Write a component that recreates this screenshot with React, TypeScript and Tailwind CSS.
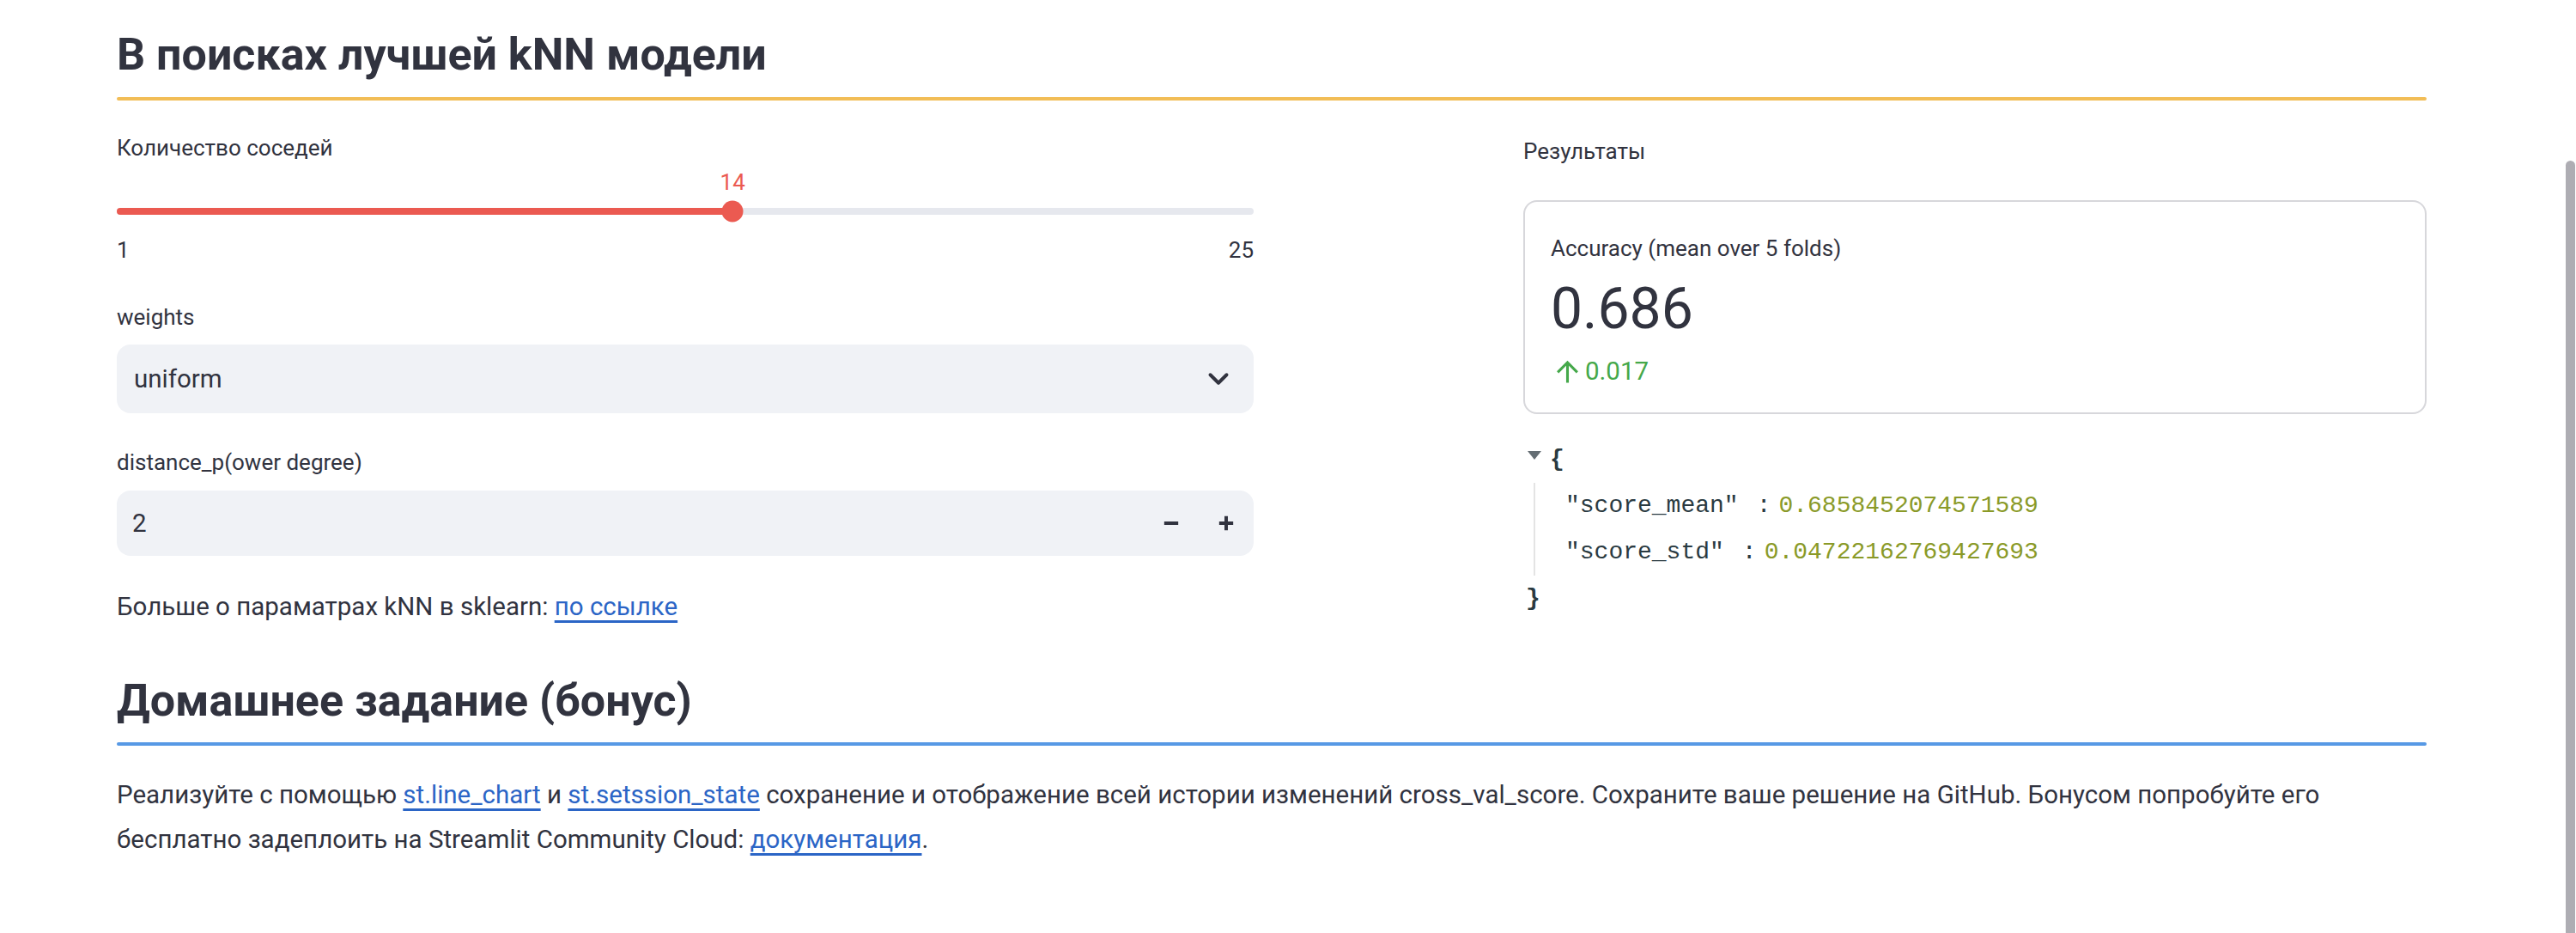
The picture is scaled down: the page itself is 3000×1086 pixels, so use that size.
import { ChevronDown } from "lucide-react";

// slider settings for the kNN neighbours control
const NEIGHBOURS = { value: 14, min: 1, max: 25 };

const Label = ({ children }: { children: React.ReactNode }) => (
  <div className="text-[26px] leading-[40px]">{children}</div>
);

const Slider = () => {
  const pct = ((NEIGHBOURS.value - NEIGHBOURS.min) / (NEIGHBOURS.max - NEIGHBOURS.min)) * 100;
  return (
    <div>
      <Label>Количество соседей</Label>
      <div className="relative h-[40px]">
        <span
          className="absolute top-0 -translate-x-1/2 text-[26px] leading-[40px] text-[#eb5a51]"
          style={{ left: `${pct}%` }}
        >
          {NEIGHBOURS.value}
        </span>
      </div>
      <div className="mt-[2px] flex h-[24px] items-center">
        <div className="relative h-[8px] w-full rounded-full bg-[#e6e8ee]">
          <div className="h-full rounded-full bg-[#eb5a51]" style={{ width: `${pct}%` }} />
          <div
            className="absolute top-1/2 h-[25px] w-[25px] -translate-x-1/2 -translate-y-1/2 rounded-full bg-[#eb5a51]"
            style={{ left: `${pct}%` }}
          />
        </div>
      </div>
      <div className="mt-[13px] flex justify-between text-[26px] leading-[40px]">
        <span>{NEIGHBOURS.min}</span>
        <span>{NEIGHBOURS.max}</span>
      </div>
    </div>
  );
};

const MinusIcon = () => (
  <svg width="28" height="28" viewBox="0 0 24 24" fill="none" stroke="#31333f" strokeWidth="3.4">
    <path d="M5 12h14" />
  </svg>
);

const PlusIcon = () => (
  <svg width="28" height="28" viewBox="0 0 24 24" fill="none" stroke="#31333f" strokeWidth="3.4">
    <path d="M5 12h14M12 5v14" />
  </svg>
);

const ArrowUp = () => (
  <svg width="39" height="39" viewBox="0 0 24 24" fill="none" stroke="#45a84a" strokeWidth="1.9">
    <path d="M12 20V5.5M5 12.5l7-7 7 7" />
  </svg>
);

const JsonView = () => (
  <div className="mt-[26px] font-['Liberation_Mono',monospace] text-[28px] leading-[54px] text-[#2a3a41]">
    <div className="flex h-[54px]">
      <svg className="ml-[5px] mt-[17px]" width="16" height="10" viewBox="0 0 16 10">
        <path d="M0 0h16L8 10z" fill="#646d73" />
      </svg>
      <span className="ml-[10px] font-bold">{"{"}</span>
    </div>
    <div className="ml-[12px] border-l-2 border-[#e4e4e4] pl-[35px]">
      <div>
        <span>"score_mean"</span>
        <span className="ml-[21px] mr-[9px]">:</span>
        <span className="text-[#8a9a28]">0.6858452074571589</span>
      </div>
      <div>
        <span>"score_std"</span>
        <span className="ml-[21px] mr-[9px]">:</span>
        <span className="text-[#8a9a28]">0.04722162769427693</span>
      </div>
    </div>
    <div className="ml-[3px] font-bold">{"}"}</div>
  </div>
);

export default function App() {
  return (
    <div className="relative min-h-screen bg-white font-['Roboto',sans-serif] text-[#31333f]">
      <div className="w-[2826px] pl-[136px] pt-[30px] pb-[60px]">
        <h2 className="text-[52px] font-bold leading-[68px]">В поисках лучшей kNN модели</h2>
        <div className="mt-[15px] h-[4px] rounded-full bg-[#f2bd56]" />

        <div className="mt-[35px] grid grid-cols-[1324px_1052px] gap-x-[314px]">
          {/* left column: inputs */}
          <div>
            <Slider />

            <div className="mt-[38px]">
              <Label>weights</Label>
            </div>
            <div className="mt-[12px] flex h-[80px] items-center justify-between rounded-[16px] bg-[#f0f2f6] pl-[20px] pr-[22px]">
              <span className="text-[29.5px] leading-[44px]">uniform</span>
              <ChevronDown size={38} strokeWidth={2.5} color="#31333f" />
            </div>

            <div className="mt-[37px]">
              <Label>distance_p(ower degree)</Label>
            </div>
            <div className="mt-[13px] flex h-[76px] items-center rounded-[16px] bg-[#f0f2f6] pl-[18px]">
              <span className="flex-1 text-[29.5px] leading-[44px]">2</span>
              <button className="flex h-full w-[64px] items-center justify-center">
                <MinusIcon />
              </button>
              <button className="flex h-full w-[64px] items-center justify-center">
                <PlusIcon />
              </button>
            </div>

            <p className="mt-[34px] text-[29.5px] leading-[51px]">
              Больше о параматрах kNN в sklearn:{" "}
              <a className="text-[#2b65c6] underline decoration-[3px] underline-offset-[6px]" href="#">
                по ссылке
              </a>
            </p>
          </div>

          {/* right column: results */}
          <div className="pt-[4px]">
            <Label>Результаты</Label>
            <div className="mt-[37px] rounded-[16px] border-2 border-[#d7d7db] px-[30px] pt-[34px] pb-[26px]">
              <Label>Accuracy (mean over 5 folds)</Label>
              <div className="mt-[11px] text-[66px] leading-[80px]">0.686</div>
              <div className="mt-[10px] flex h-[44px] items-center text-[29.5px] text-[#45a84a]">
                <ArrowUp />
                <span className="ml-px leading-[44px]">0.017</span>
              </div>
            </div>
            <JsonView />
          </div>
        </div>

        <h2 className="mt-[50px] text-[52px] font-bold leading-[68px]">Домашнее задание (бонус)</h2>
        <div className="mt-[14px] h-[4px] rounded-full bg-[#5799e5]" />

        <p className="mt-[31px] text-[29.5px] leading-[52px]">
          Реализуйте с помощью{" "}
          <a className="text-[#2b65c6] underline decoration-[3px] underline-offset-[6px]" href="#">
            st.line_chart
          </a>{" "}
          и{" "}
          <a className="text-[#2b65c6] underline decoration-[3px] underline-offset-[6px]" href="#">
            st.setssion_state
          </a>{" "}
          сохранение и отображение всей истории изменений cross_val_score. Сохраните ваше решение на GitHub. Бонусом
          попробуйте его
          <br />
          бесплатно задеплоить на Streamlit Community Cloud:{" "}
          <a className="text-[#2b65c6] underline decoration-[3px] underline-offset-[6px]" href="#">
            документация
          </a>
          .
        </p>
      </div>

      {/* scrollbar thumb */}
      <div className="absolute right-[1px] top-[187px] h-[899px] w-[11px] rounded-t-full bg-[#aeadb3]" />
    </div>
  );
}
